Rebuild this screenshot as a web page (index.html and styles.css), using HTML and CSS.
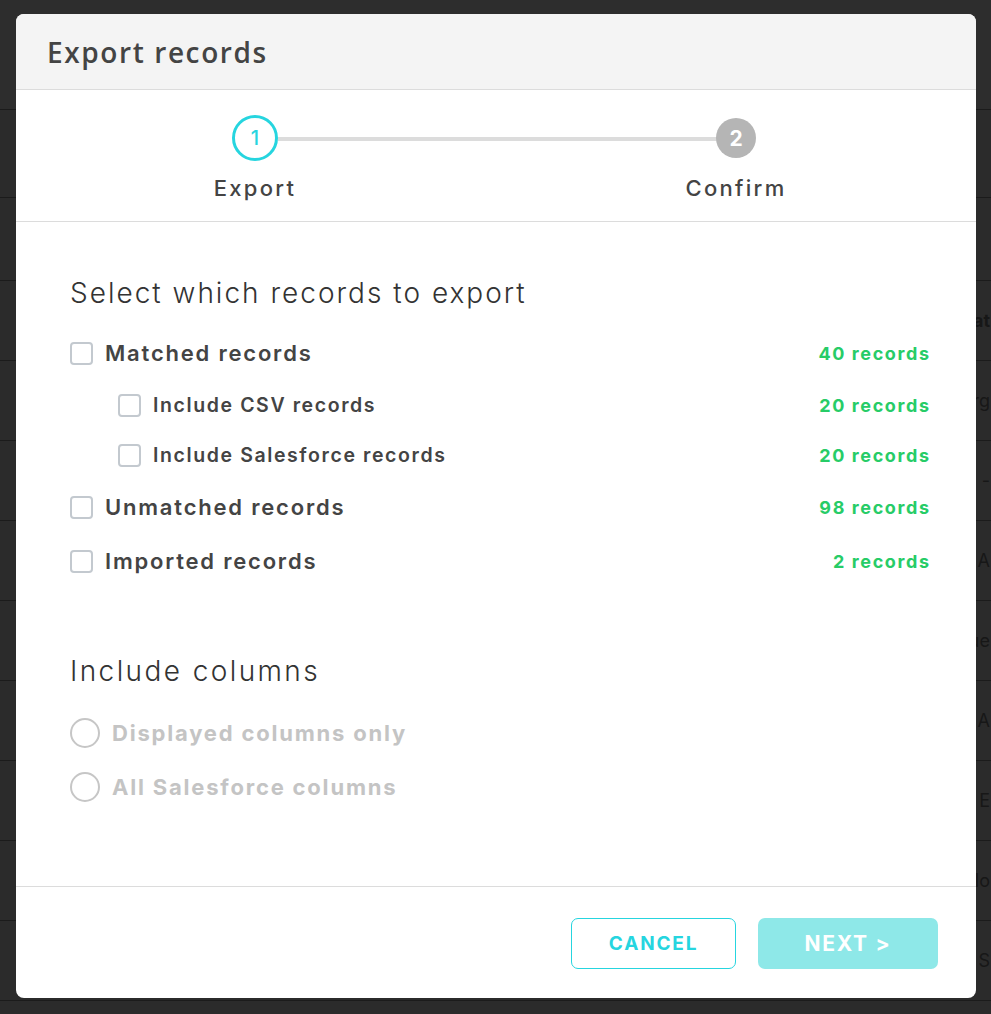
FILE: index.html
```html
<!DOCTYPE html>
<html lang="en">
<head>
<meta charset="utf-8">
<title>Export records</title>
<link rel="stylesheet" href="styles.css">
</head>
<body>
<div class="backdrop">
  <div class="bg-row bg-top"></div>
  <div class="bg-row bg-h2"></div>
  <div class="bg-row bg-h3"></div>
  <div class="bg-row"><span class="bg-text bold">at</span></div>
  <div class="bg-row"><span class="bg-text">rg</span></div>
  <div class="bg-row"><span class="bg-text">-</span></div>
  <div class="bg-row"><span class="bg-text">A</span></div>
  <div class="bg-row"><span class="bg-text">ue</span></div>
  <div class="bg-row"><span class="bg-text">A</span></div>
  <div class="bg-row"><span class="bg-text">E</span></div>
  <div class="bg-row"><span class="bg-text">olo</span></div>
  <div class="bg-row"><span class="bg-text">S</span></div>
  <div class="bg-row bg-last"></div>
</div>

<div class="modal">
  <div class="modal-header">
    <h1 class="modal-title">Export records</h1>
  </div>

  <div class="stepper">
    <div class="step-line"></div>
    <div class="step">
      <div class="step-dot-box"><div class="step-dot active">1</div></div>
      <div class="step-label">Export</div>
    </div>
    <div class="step">
      <div class="step-dot-box"><div class="step-dot pending">2</div></div>
      <div class="step-label">Confirm</div>
    </div>
  </div>

  <div class="modal-body">
    <h2 class="section-title">Select which records to export</h2>
    <div class="options">
      <div class="opt main">
        <span class="check"></span><span class="opt-label">Matched records</span><span class="count">40 records</span>
      </div>
      <div class="opt sub">
        <span class="check"></span><span class="opt-label">Include CSV records</span><span class="count">20 records</span>
      </div>
      <div class="opt sub">
        <span class="check"></span><span class="opt-label">Include Salesforce records</span><span class="count">20 records</span>
      </div>
      <div class="opt main">
        <span class="check"></span><span class="opt-label">Unmatched records</span><span class="count">98 records</span>
      </div>
      <div class="opt main">
        <span class="check"></span><span class="opt-label">Imported records</span><span class="count">2 records</span>
      </div>
    </div>

    <h2 class="section-title columns-title">Include columns</h2>
    <div class="radios">
      <div class="radio-row"><span class="radio"></span><span class="radio-label">Displayed columns only</span></div>
      <div class="radio-row"><span class="radio"></span><span class="radio-label">All Salesforce columns</span></div>
    </div>
  </div>

  <div class="modal-footer">
    <button class="btn btn-cancel">CANCEL</button>
    <button class="btn btn-next">NEXT &gt;</button>
  </div>
</div>
</body>
</html>
```

FILE: styles.css
```css
* { box-sizing: border-box; }

html, body {
  margin: 0;
  padding: 0;
  width: 991px;
  height: 1014px;
  overflow: hidden;
  background: #2b2b2b;
  font-family: Inter, "Noto Sans", "DejaVu Sans", sans-serif;
}

/* dimmed table behind the dialog */
.backdrop {
  height: 1014px;
  display: flex;
  flex-direction: column;
  overflow: hidden;
}
.bg-row {
  height: 80px;
  flex: none;
  border-bottom: 1px solid #1b1b1b;
  display: flex;
  align-items: center;
  justify-content: flex-end;
  padding-right: 1px;
  overflow: hidden;
}
.bg-top { height: 110px; background: #2d2d2d; }
.bg-h2 { height: 88px; }
.bg-h3 { height: 83px; }
.bg-last { flex: 1; height: auto; border-bottom: none; }
.bg-text {
  color: #171717;
  font-size: 18px;
  white-space: nowrap;
}
.bg-text.bold { font-weight: 700; }

/* dialog */
.modal {
  position: absolute;
  left: 16px;
  top: 14px;
  width: 960px;
  height: 984px;
  background: #fff;
  border-radius: 8px;
  overflow: hidden;
  display: flex;
  flex-direction: column;
}

.modal-header {
  height: 76px;
  background: #f4f4f4;
  border-bottom: 1px solid #dcdcdc;
  display: flex;
  align-items: center;
  padding-left: 31px;
}
.modal-title {
  margin: 0;
  font-family: "Open Sans", "Noto Sans", sans-serif;
  font-weight: 600;
  font-size: 28px;
  color: #444;
  letter-spacing: 1.6px;
}

.stepper {
  position: relative;
  height: 132px;
  border-bottom: 1px solid #dcdcdc;
  display: flex;
  justify-content: space-between;
  padding: 25px 180px 0 179px;
}
.step-line {
  position: absolute;
  left: 262px;
  right: 258px;
  top: 47px;
  height: 4px;
  background: #dcdcdc;
}
.step {
  position: relative;
  width: 120px;
  display: flex;
  flex-direction: column;
  align-items: center;
}
.step-dot-box {
  height: 46px;
  display: flex;
  align-items: center;
  justify-content: center;
}
.step-dot {
  border-radius: 50%;
  display: flex;
  align-items: center;
  justify-content: center;
  font-weight: 700;
  font-size: 21px;
}
.step-dot.active {
  width: 46px;
  height: 46px;
  border: 3px solid #26d5df;
  background: #fff;
  color: #26d5df;
  font-weight: 500;
  font-size: 20px;
}
.step-dot.pending {
  width: 40px;
  height: 40px;
  background: #b5b5b5;
  color: #fff;
}
.step-label {
  margin-top: 13px;
  font-size: 22px;
  line-height: 28px;
  font-weight: 500;
  color: #444;
  white-space: nowrap;
  letter-spacing: 2.3px;
}

.modal-body {
  flex: 1;
  padding: 53px 47px 0 54px;
}
.section-title {
  margin: 0;
  font-size: 28px;
  line-height: 36px;
  font-weight: 300;
  color: #333;
  letter-spacing: 2px;
}
.options {
  margin-top: 15px;
  display: flex;
  flex-direction: column;
}
.opt {
  display: flex;
  align-items: center;
}
.opt.main { height: 54px; }
.opt.sub { height: 50px; padding-left: 48px; }
.check {
  width: 23px;
  height: 23px;
  border: 2px solid #c3c9cf;
  border-radius: 4px;
  flex: none;
}
.opt-label {
  margin-left: 12px;
  font-weight: 600;
  color: #444;
  flex: 1;
  white-space: nowrap;
}
.opt.main .opt-label { font-size: 22px; letter-spacing: 1.8px; }
.opt.sub .opt-label { font-size: 19.5px; letter-spacing: 1.6px; }
.count {
  font-size: 18px;
  font-weight: 700;
  color: #27cc67;
  white-space: nowrap;
  letter-spacing: 1.6px;
  margin-right: -1.6px;
}

.columns-title { margin-top: 65px; letter-spacing: 2.4px; }
.radios {
  margin-top: 17px;
  display: flex;
  flex-direction: column;
}
.radio-row {
  height: 54px;
  display: flex;
  align-items: center;
}
.radio {
  width: 30px;
  height: 30px;
  border: 2px solid #c6c6c6;
  border-radius: 50%;
  flex: none;
}
.radio-label {
  margin-left: 12px;
  font-size: 22px;
  font-weight: 700;
  color: #c4c4c4;
  white-space: nowrap;
  letter-spacing: 1.8px;
}

.modal-footer {
  height: 112px;
  border-top: 1px solid #dcdcdc;
  display: flex;
  justify-content: flex-end;
  align-items: flex-start;
  gap: 22px;
  padding: 31px 38px 0 0;
}
.btn {
  height: 51px;
  border-radius: 7px;
  font-family: Inter, "Noto Sans", sans-serif;
  font-weight: 700;
  cursor: pointer;
}
.btn-cancel {
  width: 165px;
  background: #fff;
  border: 1.5px solid #26d5df;
  color: #26d5df;
  font-size: 19px;
  letter-spacing: 1.8px;
}
.btn-next {
  width: 180px;
  background: #8ee8e8;
  border: none;
  color: #fff;
  font-size: 21px;
  letter-spacing: 1.7px;
}
```
